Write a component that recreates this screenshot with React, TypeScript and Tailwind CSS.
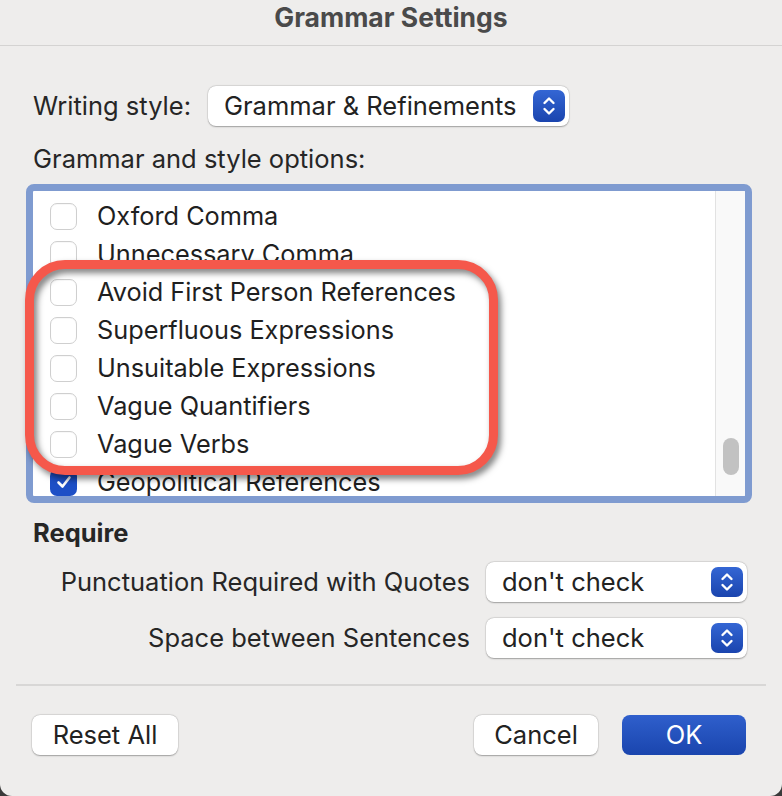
import React from "react";

const font = { fontFamily: "Inter, 'Noto Sans', 'Liberation Sans', sans-serif" };

function Stepper({ small }: { small?: boolean }) {
  return (
    <div
      className={`flex items-center justify-center rounded-[7px] bg-gradient-to-b from-[#3466d4] to-[#1a44ae] ${
        small ? "w-[32px] h-[30px]" : "w-[32px] h-[32px]"
      }`}
    >
      <svg width="16" height="22" viewBox="0 0 16 22" fill="none">
        <path d="M3.5 8 L8 3.5 L12.5 8" stroke="white" strokeWidth="2.4" strokeLinecap="round" strokeLinejoin="round" />
        <path d="M3.5 14 L8 18.5 L12.5 14" stroke="white" strokeWidth="2.4" strokeLinecap="round" strokeLinejoin="round" />
      </svg>
    </div>
  );
}

function Select({ text, width, small }: { text: string; width: string; small?: boolean }) {
  return (
    <div
      className={`${width} h-[40px] bg-white rounded-[8px] flex items-center justify-between pl-[16px] pr-[4px] shadow-[0_0.5px_1.5px_rgba(0,0,0,0.3),0_0_0_0.5px_rgba(0,0,0,0.08)]`}
    >
      <span className="text-[25.5px] text-[#222] leading-none">{text}</span>
      <Stepper small={small} />
    </div>
  );
}

function Checkbox({ checked }: { checked?: boolean }) {
  if (checked) {
    return (
      <div className="w-[27px] h-[27px] rounded-[7px] bg-[#1d4fc6] flex items-center justify-center shrink-0">
        <svg width="18" height="18" viewBox="0 0 18 18" fill="none">
          <path d="M3.5 9.5 L7.5 13.5 L14.5 4.5" stroke="white" strokeWidth="2.6" strokeLinecap="round" strokeLinejoin="round" />
        </svg>
      </div>
    );
  }
  return (
    <div className="w-[27px] h-[27px] rounded-[7px] bg-white border border-[#cfcfcf] shadow-[inset_0_0.5px_1px_rgba(0,0,0,0.06)] shrink-0" />
  );
}

const items: { label: string; checked?: boolean }[] = [
  { label: "Oxford Comma" },
  { label: "Unnecessary Comma" },
  { label: "Avoid First Person References" },
  { label: "Superfluous Expressions" },
  { label: "Unsuitable Expressions" },
  { label: "Vague Quantifiers" },
  { label: "Vague Verbs" },
  { label: "Geopolitical References", checked: true },
];

function Button({ children, primary, width }: { children: React.ReactNode; primary?: boolean; width: string }) {
  return (
    <div
      className={`${width} h-[40px] rounded-[8px] flex items-center justify-center text-[25.5px] leading-none ${
        primary
          ? "bg-gradient-to-b from-[#2f5fcc] to-[#1a45ae] text-white"
          : "bg-white text-[#222] shadow-[0_0.5px_1.5px_rgba(0,0,0,0.3),0_0_0_0.5px_rgba(0,0,0,0.08)]"
      }`}
    >
      {children}
    </div>
  );
}

export default function App() {
  return (
    <div className="w-[782px] h-[796px] bg-[#3a3a3a]" style={font}>
      <div className="w-[782px] h-[796px] bg-[#eeedec] rounded-b-[12px] flex flex-col overflow-hidden">
        {/* Title bar */}
        <div className="h-[46px] shrink-0 border-b border-[#d4d3d2] flex items-center justify-center pb-[10px]">
          <span className="text-[26.5px] font-bold text-[#4a4a4a] leading-none">Grammar Settings</span>
        </div>

        {/* Writing style */}
        <div className="mt-[40px] ml-[33px] flex items-center gap-[17px]">
          <span className="text-[25.5px] text-[#262626] leading-none">Writing style:</span>
          <Select text="Grammar & Refinements" width="w-[361px]" />
        </div>

        <div className="mt-[20px] ml-[33px] text-[25.5px] text-[#262626] leading-[26px]">Grammar and style options:</div>

        {/* List */}
        <div className="relative mt-[12px] ml-[26px] w-[726px] h-[319px]">
          <div className="w-full h-full border-[7px] border-[#7f9bd0] rounded-[8px] bg-white flex overflow-hidden">
            <div className="flex-1 pt-[6px] overflow-hidden">
              {items.map((it) => (
                <div key={it.label} className="h-[38px] flex items-center pl-[17px] gap-[20px] shrink-0">
                  <Checkbox checked={it.checked} />
                  <span className="text-[25.3px] text-[#1f1f1f] leading-none">{it.label}</span>
                </div>
              ))}
            </div>
            <div className="w-[30px] bg-[#f9f9f9] border-l border-[#e2e2e2] flex flex-col justify-end items-center pb-[21px]">
              <div className="w-[16px] h-[37px] rounded-full bg-[#c2c2c2]" />
            </div>
          </div>
          {/* Red highlight */}
          <div className="absolute left-[-1px] top-[76px] w-[473px] h-[215px] rounded-[40px] border-[9px] border-[#f5584b] [filter:drop-shadow(3px_4px_3px_rgba(0,0,0,0.5))]" />
        </div>

        {/* Require */}
        <div className="mt-[17px] ml-[33px] text-[25.5px] font-bold text-[#262626] leading-[26px]">Require</div>

        <div className="mt-[16px] mr-[35px] flex items-center justify-end gap-[16px]">
          <span className="text-[25.5px] text-[#262626] leading-none">Punctuation Required with Quotes</span>
          <Select text="don't check" width="w-[261px]" small />
        </div>
        <div className="mt-[16px] mr-[35px] flex items-center justify-end gap-[16px]">
          <span className="text-[25.5px] text-[#262626] leading-none">Space between Sentences</span>
          <Select text="don't check" width="w-[261px]" small />
        </div>

        <div className="mt-[26px] mx-[16px] h-[2px] bg-[#d8d7d6]" />

        <div className="mt-[29px] pl-[32px] pr-[36px] flex items-center">
          <Button width="w-[146px]">Reset All</Button>
          <div className="flex-1" />
          <Button width="w-[124px]">Cancel</Button>
          <div className="w-[24px]" />
          <Button width="w-[124px]" primary>
            OK
          </Button>
        </div>
      </div>
    </div>
  );
}
